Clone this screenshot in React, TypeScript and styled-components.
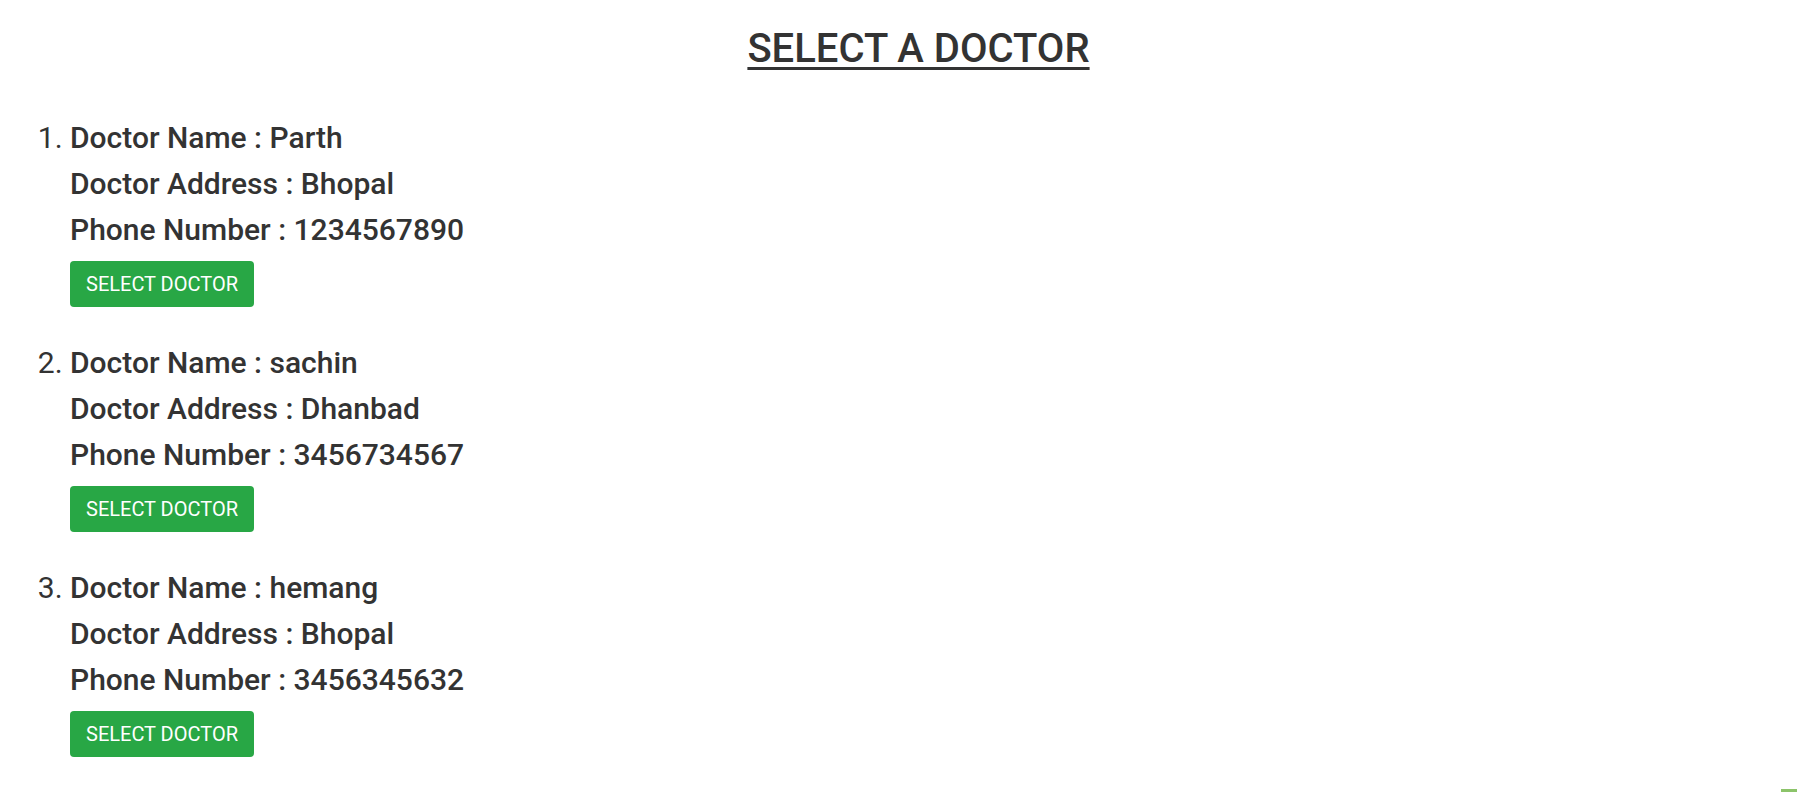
import styled, { createGlobalStyle } from 'styled-components'

const GlobalStyle = createGlobalStyle`
  html, body {
    margin: 0;
    padding: 0;
    background: #ffffff;
  }
  body {
    font-family: Roboto, 'Liberation Sans', Arial, sans-serif;
    color: #333333;
  }
`

const Page = styled.div`
  padding: 25px 0 40px 40px;
`

const Title = styled.h1`
  margin: 0;
  text-align: center;
  font-size: 40px;
  font-weight: 500;
  line-height: 48px;
  text-decoration: underline;
  text-decoration-thickness: 3px;
  text-underline-offset: 5px;
  color: #333333;
`

const DoctorList = styled.ol`
  margin: 42px 0 0 0;
  padding-left: 30px;
  font-size: 30px;
  line-height: 46px;
`

const DoctorItem = styled.li`
  margin-bottom: 33px;
  font-weight: 400;
`

const InfoLine = styled.div`
  font-weight: 500;
`

const SelectButton = styled.button`
  display: block;
  margin-top: 8px;
  height: 46px;
  padding: 0 16px;
  border: none;
  border-radius: 4px;
  background: #28a745;
  color: #ffffff;
  font-family: Roboto, 'Liberation Sans', Arial, sans-serif;
  font-size: 20px;
  font-weight: 400;
  text-transform: uppercase;
  cursor: pointer;
`

const CornerMark = styled.div`
  position: fixed;
  right: 0;
  bottom: 0;
  width: 16px;
  height: 3px;
  background: #8cc46a;
`

const doctors = [
  { name: 'Parth', address: 'Bhopal', phone: '1234567890' },
  { name: 'sachin', address: 'Dhanbad', phone: '3456734567' },
  { name: 'hemang', address: 'Bhopal', phone: '3456345632' },
]

export default function App() {
  return (
    <>
      <GlobalStyle />
      <Page>
        <Title>SELECT A DOCTOR</Title>
        <DoctorList>
          {doctors.map(d => (
            <DoctorItem key={d.phone}>
              <InfoLine>Doctor Name : {d.name}</InfoLine>
              <InfoLine>Doctor Address : {d.address}</InfoLine>
              <InfoLine>Phone Number : {d.phone}</InfoLine>
              <SelectButton>Select Doctor</SelectButton>
            </DoctorItem>
          ))}
        </DoctorList>
      </Page>
      <CornerMark />
    </>
  )
}
